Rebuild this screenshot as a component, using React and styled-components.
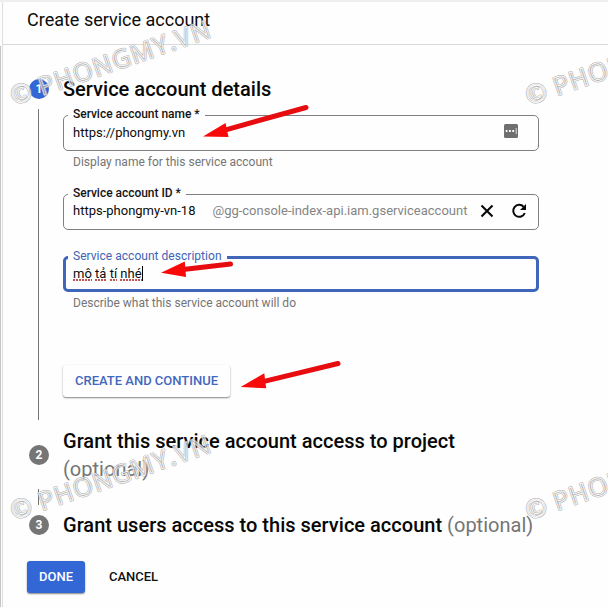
import React from "react";
import styled, { createGlobalStyle } from "styled-components";

const GlobalStyle = createGlobalStyle`
  * { box-sizing: border-box; }
  body { margin: 0; background: #fefefe; overflow: hidden; }
`;

const Page = styled.div`
  position: relative;
  width: 608px;
  height: 607px;
  overflow: hidden;
  background: #fefefe;
  color: #0c0c0c;
  font-family: Roboto, sans-serif;
  border-top: 2px solid #efefef;
  display: flex;
`;

const Gutter = styled.div`
  width: 3px;
  border-right: 1px solid #dedede;
  padding-top: 44px;
  &::before {
    content: "";
    display: block;
    width: 1px;
    height: 100%;
    background: #c4c4c4;
  }
`;

const Panel = styled.div`
  flex: 1;
  min-width: 0;
`;

const Header = styled.header`
  height: 43px;
  border-bottom: 1px solid #dadada;
  padding-left: 24px;
  display: flex;
  align-items: center;
  padding-bottom: 6px;
`;

const Title = styled.h1`
  margin: 0;
  font-size: 18px;
  font-weight: 400;
  line-height: 24px;
  white-space: nowrap;
`;

const Steps = styled.div`
  display: grid;
  grid-template-columns: 20px 476px;
  column-gap: 14px;
  padding: 30px 0 0 26px;
`;

const Rail = styled.div`
  display: flex;
  flex-direction: column;
  align-items: center;
`;

const Bullet = styled.span`
  width: 20px;
  height: 20px;
  border-radius: 50%;
  margin-top: ${(p) => p.$top || 0}px;
  background: ${(p) => (p.$active ? "#3367d6" : "#757575")};
  color: #fff;
  font-size: 12px;
  font-weight: 700;
  line-height: 20px;
  text-align: center;
`;

const Connector = styled.span`
  width: 1px;
  height: ${(p) => p.$length}px;
  margin-top: ${(p) => p.$top || 0}px;
  margin-right: 1px;
  background: #757575;
`;

const StepBody = styled.section`
  height: ${(p) => p.$height}px;
`;

const StepTitle = styled.h2`
  margin: 0;
  font-size: 20px;
  font-weight: 500;
  line-height: 28px;
  letter-spacing: 0.015px;
  white-space: nowrap;
  color: #080808;
`;

const Optional = styled.span`
  font-weight: 400;
  color: #757575;
`;

const Field = styled.div`
  position: relative;
  height: 36px;
  margin-top: ${(p) => p.$top}px;
  display: flex;
  align-items: center;
  border: ${(p) => (p.$focused ? "3px solid #3f66b8" : "1px solid #808084")};
  border-radius: 5px;
  padding: ${(p) => (p.$focused ? "0 7px 1px" : `0 9px ${p.$inset}px`)};
`;

const Label = styled.label`
  position: absolute;
  left: ${(p) => (p.$focused ? 2 : 4)}px;
  top: ${(p) => (p.$focused ? -10 : -9)}px;
  padding: 0 5px;
  background: #fefefe;
  font-size: 12px;
  line-height: 14px;
  font-weight: ${(p) => (p.$focused ? 400 : 500)};
  color: ${(p) => (p.$focused ? "#3f63b4" : "#141414")};
  letter-spacing: ${(p) => (p.$focused ? "0.03px" : "-0.03px")};
  white-space: nowrap;
`;

const Value = styled.span`
  font-size: 13px;
  line-height: 18px;
  white-space: nowrap;
`;

const Suffix = styled(Value)`
  margin-left: 17px;
  color: #858585;
`;

const Misspelled = styled.span`
  background: radial-gradient(circle at 1px 1px, #c0504f 0.7px, transparent 1.1px) 0 100% / 3px 2px repeat-x;
`;

const Caret = styled.span`
  width: 1px;
  height: 15px;
  background: #000;
`;

const Hint = styled.p`
  margin: ${(p) => p.$top}px 0 0 10px;
  font-size: 12px;
  line-height: 16px;
  color: #757575;
  white-space: nowrap;
`;

const FieldIcon = styled.svg`
  display: block;
  flex: none;
  margin-left: ${(p) => p.$left || "0"};
  margin-right: ${(p) => p.$right || "0"};
  margin-bottom: ${(p) => p.$lift || "0"};
`;

const Button = styled.button`
  border: 0;
  height: 32px;
  padding: 0;
  width: ${(p) => p.$width}px;
  margin-top: ${(p) => p.$top || 0}px;
  border-radius: 3px;
  font: 500 13px/32px Roboto, sans-serif;
  text-align: center;
  white-space: nowrap;
  color: ${(p) => (p.$kind === "primary" ? "#fff" : p.$kind === "raised" ? "#4367bd" : "#111")};
  background: ${(p) => (p.$kind === "primary" ? "#3367d6" : "#fefefe")};
  box-shadow: ${(p) =>
    p.$kind === "plain" ? "none" : "0 1px 2px rgba(0,0,0,.36), 0 1px 1px rgba(0,0,0,.16)"};
`;

const Actions = styled.div`
  display: flex;
  gap: 12px;
  padding: 22px 0 0 24px;
`;

const Overlay = styled.svg`
  position: absolute;
  left: 0;
  top: -2px;
  pointer-events: none;
`;

const WATERMARKS = [
  [21, 93],
  [536, 93],
  [21, 508],
  [536, 508],
];

const ARROWS = [
  { head: "203,136.5 225.5,123 228.5,137", from: [224, 130.3], to: [306, 107.5] },
  { head: "161,272.7 184.8,261.6 186,277", from: [183, 269.6], to: [230.5, 264] },
  { head: "240.7,387 264.3,373.3 266.2,388.3", from: [263, 381.6], to: [338, 363.5] },
];

function Watermark({ x, y }) {
  return (
    <g
      transform={`translate(${x} ${y}) rotate(-19.1)`}
      fontFamily="'Open Sans', 'Noto Sans', sans-serif"
      fontSize="25"
      fontWeight="500"
      fill="none"
      strokeLinejoin="round"
      opacity="0.8"
    >
      {[
        ["#959595", 2],
        ["#f8f8f8", 1],
      ].map(([stroke, width]) => (
        <g key={stroke} stroke={stroke} strokeWidth={width}>
          <text x="-10.4" y="9">©</text>
          <text x="19" y="9.5" textLength="180">PHONGMY.VN</text>
        </g>
      ))}
    </g>
  );
}

export default function App() {
  return (
    <>
      <GlobalStyle />
      <Page>
        <Gutter />
        <Panel>
          <Header>
            <Title>Create service account</Title>
          </Header>

          <Steps>
            <Rail>
              <Bullet $active $top={4}>1</Bullet>
              <Connector $length={311} $top={10} />
            </Rail>
            <StepBody $height={352}>
              <StepTitle>Service account details</StepTitle>

              <Field $top={12} $inset={1}>
                <Label>Service account name *</Label>
                <Value>https://phongmy.vn</Value>
                <FieldIcon $left="auto" $right="11px" $lift="4px" width="14" height="14" viewBox="0 0 14 14">
                  <rect width="14" height="14" rx="1.5" fill="#6f6f6f" />
                  <path d="M1.7 7h1.8M5 7h1.8M8.3 7h1.8" stroke="#fff" strokeWidth="1.8" />
                  <path d="M12.2 4v6.2" stroke="#ddd" strokeWidth="1" />
                </FieldIcon>
              </Field>
              <Hint $top={3}>Display name for this service account</Hint>

              <Field $top={24} $inset={3}>
                <Label>Service account ID *</Label>
                <Value>https-phongmy-vn-18</Value>
                <Suffix>@gg-console-index-api.iam.gserviceaccount</Suffix>
                <FieldIcon $left="auto" $right="17px" width="14" height="14" viewBox="0 0 14 14">
                  <path d="M1.5 1.5l11 11M12.5 1.5l-11 11" stroke="#080808" strokeWidth="2.1" />
                </FieldIcon>
                <FieldIcon $right="2px" width="16" height="16" viewBox="0 0 16 16">
                  <path d="M12.6 3.7A6 6 0 1 0 13.8 10" fill="none" stroke="#080808" strokeWidth="2" />
                  <path d="M15 1v6H9z" fill="#080808" />
                </FieldIcon>
              </Field>

              <Field $top={26} $focused>
                <Label $focused>Service account description</Label>
                <Value>
                  <Misspelled>mô</Misspelled> <Misspelled>tả</Misspelled> <Misspelled>tí</Misspelled>{" "}
                  <Misspelled>nhé</Misspelled>
                </Value>
                <Caret />
              </Field>
              <Hint $top={3}>Describe what this service account will do</Hint>

              <Button $kind="raised" $width={167} $top={54}>
                CREATE AND CONTINUE
              </Button>
            </StepBody>

            <Rail>
              <Bullet $top={18}>2</Bullet>
              <Connector $length={16} $top={24} />
            </Rail>
            <StepBody $height={84}>
              <StepTitle>
                Grant this service account access to project
                <br />
                <Optional>(optional)</Optional>
              </StepTitle>
            </StepBody>

            <Rail>
              <Bullet $top={4}>3</Bullet>
            </Rail>
            <StepBody $height={28}>
              <StepTitle>
                Grant users access to this service account <Optional>(optional)</Optional>
              </StepTitle>
            </StepBody>
          </Steps>

          <Actions>
            <Button $kind="primary" $width={58}>
              DONE
            </Button>
            <Button $kind="plain" $width={73}>
              CANCEL
            </Button>
          </Actions>
        </Panel>

        <Overlay width="608" height="607" viewBox="0 0 608 607">
          {WATERMARKS.map(([x, y]) => (
            <Watermark key={`${x}-${y}`} x={x} y={y} />
          ))}
          {ARROWS.map(({ head, from, to }) => (
            <g key={head} fill="#f90a0a" stroke="#e60c10">
              <path d={`M${from} L${to}`} strokeWidth="5" strokeLinecap="round" />
              <polygon points={head} stroke="none" />
            </g>
          ))}
        </Overlay>
      </Page>
    </>
  );
}
